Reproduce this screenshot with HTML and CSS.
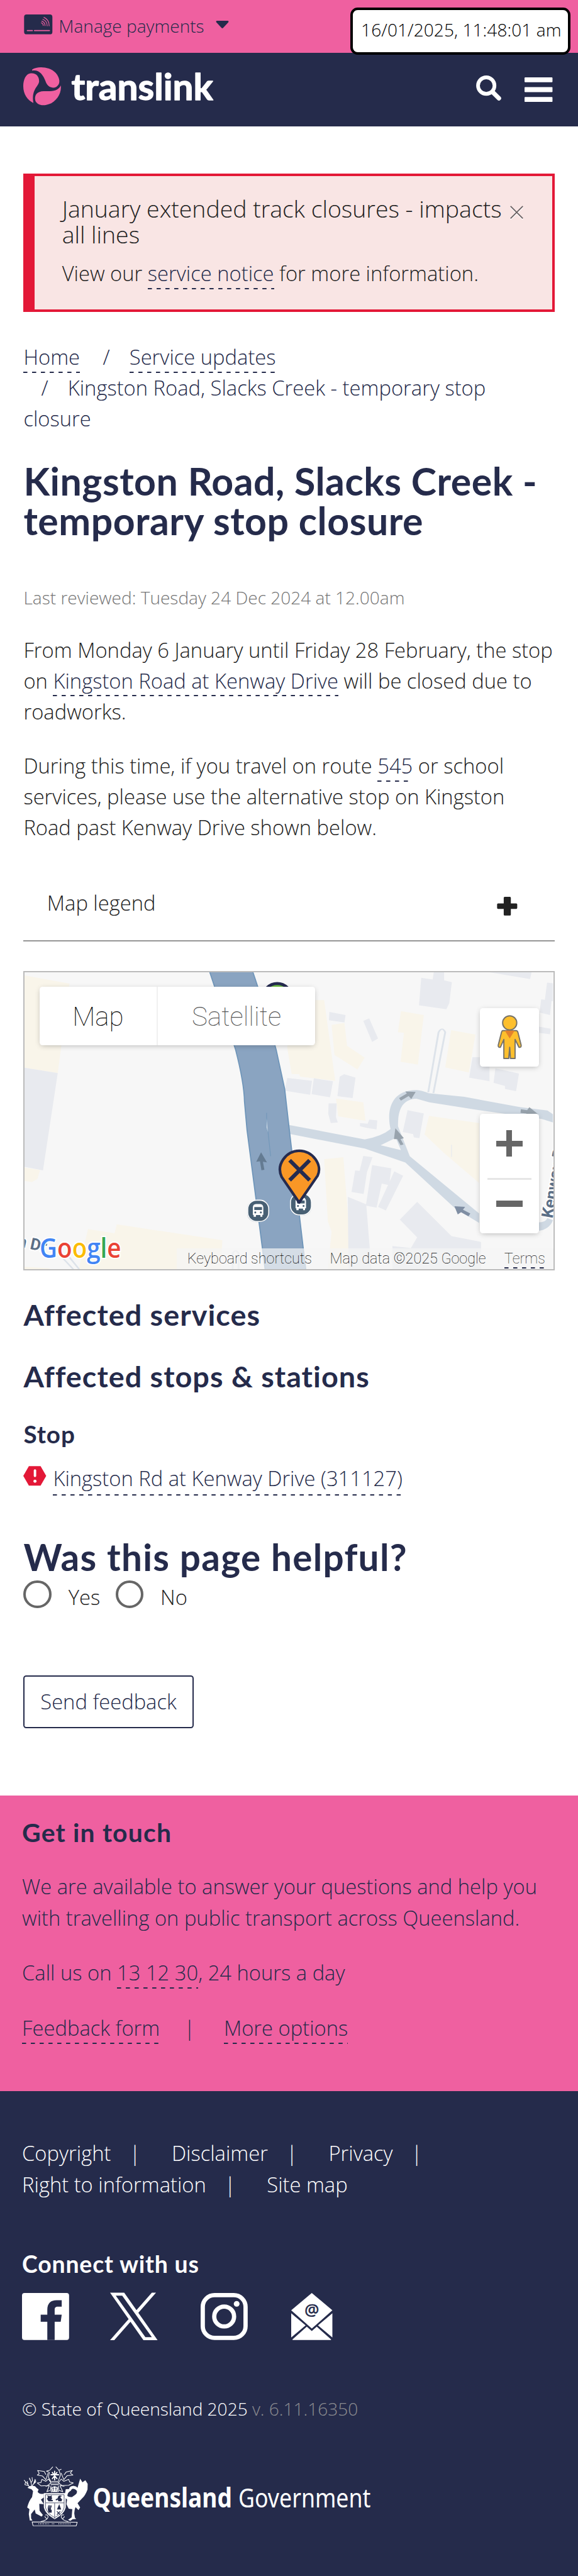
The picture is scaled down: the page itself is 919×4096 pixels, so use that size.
FILE: index.html
```
<!DOCTYPE html>
<html lang="en">
<head>
<meta charset="utf-8">
<title>Kingston Road, Slacks Creek - temporary stop closure | Translink</title>
<link rel="stylesheet" href="styles.css">
</head>
<body>
<div class="topbar">
  <svg class="card-icon" viewBox="58 27 176 123"><rect x="59" y="27" width="174" height="122" rx="15" fill="#252b4b"/><path d="M79 126H110M123 126H215" stroke="#ef60a0" stroke-width="7" stroke-linecap="round"/><path d="M165 78q12 5 12 17M168 68q20 7 20 28M174 57q27 10 27 40M181 45q33 14 32 52" fill="none" stroke="#ef60a0" stroke-width="4.5" stroke-linecap="round"/></svg>
  <span class="topbar-label">Manage payments</span>
  <svg class="caret" viewBox="0 0 17 10"><path d="M1.6 0H15.4Q17.4 .4 16.3 2L9.6 9.3Q8.5 10.3 7.4 9.3L.7 2Q-.4 .4 1.6 0Z" fill="#252b4b"/></svg>
  <div class="timestamp">16/01/2025, 11:48:01 am</div>
</div>
<header class="navbar">
  <svg class="brand" viewBox="54 350 1164 232"><g fill="#ef60a0"><path d="M108 364C140 342 215 345 252 384C282 418 282 455 256 470C226 484 200 465 190 435C176 395 150 362 108 370Z"/><path d="M92 388C128 380 151 402 151 435C149 470 102 482 116 568C80 550 54 515 54 465C54 425 70 393 92 388Z"/><path d="M284 461C288 500 270 545 225 570C180 590 142 585 128 555C120 520 138 497 180 496C220 497 267 500 284 461Z"/></g><text x="349" y="549" textLength="867" lengthAdjust="spacingAndGlyphs" class="brand-text">translink</text></svg>
  <svg class="search" viewBox="0 0 17 17" fill="none" stroke="#fff"><circle cx="6.9" cy="6.9" r="5.6" stroke-width="2.5"/><path d="M11.3 11.3L15.5 15.5" stroke-width="3" stroke-linecap="round"/></svg>
  <svg class="menu" viewBox="0 0 19 17" fill="#fff"><rect width="19" height="3.3" rx=".5"/><rect y="6.6" width="19" height="3.4" rx=".5"/><rect y="13.4" width="19" height="3.3" rx=".5"/></svg>
</header>
<main class="main">
  <section class="alert">
    <div class="alert-title">January extended track closures - impacts<br>all lines</div>
    <p class="alert-text">View our <a class="link">service notice</a> for more information.</p>
    <svg class="close" viewBox="0 0 27 29" fill="none"><path d="M1 3L26 28M26 3L1 28" stroke="#fff" stroke-width="2.6"/><path d="M1 1L26 26M26 1L1 26" stroke="#6b6264" stroke-width="2.4"/></svg>
  </section>
  <nav class="crumbs"><a class="link">Home</a> <span class="sep">/</span><a class="link">Service updates</a><br><span class="sep">/</span>Kingston Road, Slacks Creek - temporary stop<br>closure</nav>
  <h1 class="title">Kingston Road, Slacks Creek -<br>temporary stop closure</h1>
  <p class="reviewed">Last reviewed: Tuesday 24 Dec 2024 at 12.00am</p>
  <p class="copy">From Monday 6 January until Friday 28 February, the stop<br>on <a class="link">Kingston Road at Kenway Drive</a> will be closed due to<br>roadworks.</p>
  <p class="copy">During this time, if you travel on route <a class="link">545</a> or school<br>services, please use the alternative stop on Kingston<br>Road past Kenway Drive shown below.</p>
  <div class="legend"><span>Map legend</span><svg class="plus" viewBox="0 0 41 38"><path d="M2 13.5H13.5V2Q13.5 0 15.5 0H26Q28 0 28 2V13.5H39Q41 13.5 41 15.5V22.5Q41 24.5 39 24.5H28V36Q28 38 26 38H15.5Q13.5 38 13.5 36V24.5H2Q0 24.5 0 22.5V15.5Q0 13.5 2 13.5Z" fill="#222"/></svg></div>

  <div class="map">
    <svg class="map-canvas" viewBox="68 55 1432 1437" preserveAspectRatio="none">
      <rect x="68" y="55" width="1432" height="1437" fill="#f7f7f7"/>
      <g fill="#f9f5ea">
        <path d="M68 70L190 110L158 543L68 517ZM68 1000L110 1012L103 1055L88 1070L68 1065Z"/>
        <path d="M790 190H880L910 580L815 560L812 548L792 548L780 420ZM900 310L935 300L942 410L990 468L970 525L908 455Z"/>
        <path d="M1088 243L1150 262L1134 502L1087 488L1096 348L1080 345ZM1224 335L1290 356L1272 540L1208 515Z"/>
        <path d="M912 666L986 684L992 774L918 752ZM880 960L932 950L956 1492H890L900 1310L890 1260Z"/>
        <path d="M1164 750L1300 785V1075L1205 930L1152 840ZM240 1298L312 1318L318 1275L604 1352L600 1492H215ZM68 1480L136 1488V1492H68Z"/>
      </g>
      <g fill="#e8eaef">
        <path d="M68 517L158 543L118 1014L68 996ZM1143 82L1174 90L1177 55H1205V94L1226 103L1219 205L1211 234L1137 215ZM1328 55H1442L1438 88Z"/>
        <path d="M894 247L938 262L935 298L893 287ZM986 290L1002 278L1026 375L1010 392ZM1484 105L1500 108V195L1478 190ZM1468 186L1496 192L1492 262L1464 250ZM1462 318L1494 328L1492 355L1462 348Z"/>
        <path d="M780 566L847 580L842 648L773 628ZM852 568L904 582L896 660L846 645ZM922 560L934 548L965 565L957 664L916 655ZM892 690L914 690L912 755L917 782L898 785L891 740Z"/>
        <path d="M977 785L998 788L1002 768L1024 772L1022 815L996 808L977 800ZM1106 722L1150 738L1138 858L1123 854L1121 838L1093 828ZM1282 466H1328V582L1273 565ZM1344 520L1408 545L1400 630L1370 620V605L1339 590Z"/>
        <path d="M986 944L1011 950L996 1022L987 1128L954 1118L964 1014L976 1016ZM1010 988L1062 1004L1056 1085L1036 1078L1022 1194L993 1184ZM1070 1018L1094 1040L1047 1208L1026 1190Z"/>
        <path d="M944 1142L994 1178L1008 1492H946ZM1132 1166L1225 1332L1305 1360V1492H1065V1380L1115 1390L1132 1338L1085 1252Z"/>
      </g>
      <path d="M68 765L125 780M105 888L125 893M1225 890V948" stroke="#e8eaef" stroke-width="2"/>
      <path d="M1162 636L1190 345Q1200 315 1208 345L1176 640M170 1435L200 1492M190 1435L216 1492M632 1492V1415Q640 1390 648 1415V1492" fill="none" stroke="#dde3ea" stroke-width="5"/>
      <path fill="#cfd9e3" d="M780 792L990 864Q1035 850 1060 814C1050 740 1055 625 1130 625Q1145 626 1163 640L1260 658L1412 708L1485 724L1500 742V782L1470 765L1300 722L1165 684L1130 667C1085 670 1080 740 1080 800L1112 945L1300 1222V1268L1235 1198L1100 976L990 908L782 836ZM1033 892L1088 916L1074 856ZM1460 1266Q1480 1265 1485 1245L1500 1255Q1490 1300 1460 1307Z" fill-rule="evenodd"/>
      <path d="M570 55L640 430Q663 590 664 680L671 820L720 1492H830L787 840L773 620L750 430Q715 200 687 55Z" fill="#8aa4c1"/>
      <path d="M570 55L640 430Q663 590 664 680L671 820L720 1492M687 55Q715 200 750 430L773 620L787 840L830 1492" fill="none" stroke="#6e95b9" stroke-width="3"/>
      <path d="M724 735V810L728 830L735 945" fill="none" stroke="#7398ba" stroke-width="2"/><path d="M724 762L727 830L724 805Z" fill="#e9eef2"/>
      <g fill="#647b92"><path d="M709 926L725 975L714 972L718 1011L710 1013L706 970L696 972Z"/></g>
      <g fill="#98a3ad"><path d="M1073 810L1096 858L1087 862L1095 888L1087 892L1078 862L1069 862ZM1128 634L1100 632L1104 642L1083 664L1088 676L1109 654L1116 668ZM1413 718L1430 722L1436 708L1460 742L1426 748L1428 738L1412 735Z"/></g>
      <path d="M1233 1187L1262 1190L1256 1204L1276 1222L1271 1236L1251 1216L1242 1227Z" fill="#7f8ea3"/>
      <g transform="translate(638.4 855.4) scale(.4433 .792)">
        <g id="bus"><rect x="74" y="382" width="134" height="134" rx="54" fill="#5d7288" opacity=".35"/><rect x="78" y="382" width="128" height="130" rx="54" fill="#486074" stroke="#fff" stroke-width="6"/><path d="M109 425Q111 407 128 406H155Q170 407 173 425V472H167V483H155V473H128V483H114V472H109Z" fill="#fff"/><rect x="118" y="424" width="47" height="18" fill="#486074"/><circle cx="124" cy="457" r="6" fill="#486074"/><circle cx="158" cy="457" r="6" fill="#486074"/></g>
        <use href="#bus" x="261" y="-40"/>
        <path d="M392 396L285 240C250 165 310 82 393 80C476 82 536 165 505 232Z" fill="#f99726" stroke="#252b4f" stroke-width="16" stroke-linejoin="round"/>
        <path d="M334 138L456 260M456 138L334 260" stroke="#252b4f" stroke-width="24"/>
      </g>
      <g transform="scale(1.33 2.376)">
        <circle cx="566" cy="75" r="29" fill="#6fbe44" stroke="#252b4f" stroke-width="6"/>
        <text class="road-label" transform="translate(1127 525) rotate(-80)">Kenway Dr</text>
        <text class="road-label" transform="translate(35 581) rotate(12)">n Dr</text>
        <text class="google" x="82" y="605" textLength="166" lengthAdjust="spacingAndGlyphs"><tspan fill="#4285f4">G</tspan><tspan fill="#ea4335">o</tspan><tspan fill="#fbbc05">o</tspan><tspan fill="#4285f4">g</tspan><tspan fill="#34a853">l</tspan><tspan fill="#ea4335">e</tspan></text>
      </g>
    </svg>
    <div class="map-type"><span class="map-tab on">Map</span><span class="map-tab sat">Satellite</span></div>
    <div class="pegman"><svg viewBox="0 0 50 91"><g fill="#fdbf2d" stroke="#777369" stroke-width="2.5" stroke-linejoin="round"><path d="M11 32H38Q41 32 42 36L48.500 62Q49 67 44 66L36 50V89H26.500L25 66L23 89H13V50L6 66Q1 67 1.500 62L8 36Q9 32 11 32Z"/><circle cx="25" cy="16" r="14.500"/></g><path d="M15 32H35L25 48Z" fill="#e2812d"/></svg></div>
    <div class="zoom"><span class="zoom-in"></span><span class="zoom-line"></span><span class="zoom-out"></span></div>
    <div class="credits"><span class="keys">Keyboard shortcuts</span><span class="data">Map data ©2025 Google</span><span class="link terms">Terms</span></div>
  </div>

  <h2 class="heading">Affected services</h2>
  <h2 class="heading second">Affected stops &amp; stations</h2>
  <h3 class="subheading">Stop</h3>
  <div class="stop"><svg class="warn" viewBox="0 0 47 40"><path d="M11.500 0H35.500L47 20L35.500 40H11.500L0 20Z" fill="#e31837"/><path d="M24 9V20" stroke="#fff" stroke-width="5" stroke-linecap="round"/><circle cx="24" cy="31" r="3.200" fill="#fff"/></svg><a class="link">Kingston Rd at Kenway Drive (311127)</a></div>
  <h2 class="helpful">Was this page helpful?</h2>
  <div class="radios"><span class="radio"></span><span class="yes">Yes</span><span class="radio"></span><span class="no">No</span></div>
  <div class="button">Send feedback</div>
</main>
<section class="touch">
  <h2 class="touch-title">Get in touch</h2>
  <p>We are available to answer your questions and help you<br>with travelling on public transport across Queensland.</p>
  <p>Call us on <a class="link">13 12 30</a>, 24 hours a day</p>
  <p class="touch-links"><a class="link">Feedback form</a><span class="bar">|</span><a class="link">More options</a></p>
</section>
<footer class="footer">
  <div class="row"><span>Copyright</span><i>|</i><span>Disclaimer</span><i>|</i><span>Privacy</span><i>|</i></div>
  <div class="row"><span>Right to information</span><i>|</i><span>Site map</span></div>
  <h3 class="connect">Connect with us</h3>
  <div class="social">
    <svg class="fb" viewBox="0 0 32 32"><rect width="32" height="32" rx="1.700" fill="#fff"/><path d="M17.200 32V19.600H12.700V14.800H17.200V11.500C17.200 7 19.500 4.900 23.500 4.900H27V9.300H24.400C22.800 9.300 22.200 9.900 22.200 11.400V14.800H27L26.300 19.600H22.200V32Z" fill="#252b4b"/></svg>
    <svg class="x" viewBox="0 0 300 300.250"><path fill="#fff" d="M178.570 127.150 290.270 0h-26.460l-97.030 110.380L89.340 0H0l117.130 166.930L0 300.250h26.460l102.400-116.590 81.800 116.590h89.340M36.010 19.540H76.660l187.130 262.130h-40.660"/></svg>
    <svg class="ig" viewBox="0 0 32 32" fill="none" stroke="#fff"><rect x="1.450" y="1.450" width="29.100" height="29.100" rx="8" stroke-width="2.900"/><circle cx="16" cy="16" r="6.750" stroke-width="2.900"/><circle cx="24.500" cy="7.400" r="1.950" fill="#fff" stroke="none"/></svg>
    <svg class="mail" viewBox="0 0 28 32"><path d="M14 0L28 11.800L14 24.200L0 11.800ZM0 13.800L9.800 22L0 30.300ZM28 13.800L18.200 22L28 30.300ZM.8 31.600L10.600 22.900L14 25.900L17.400 22.900L27.200 31.600Q27 32 26.500 32H1.500Q1 32 .8 31.600Z" fill="#fff"/><text class="at" x="14" y="15.600" text-anchor="middle">@</text></svg>
  </div>
  <p class="copyright">© State of Queensland 2025 <span>v. 6.11.16350</span></p>
  <div class="gov">
    <svg class="crest" viewBox="56 60 393 364">
      <g fill="#fff">
        <path d="M78 190Q90 176 108 177L124 180Q130 188 146 200L140 214Q150 232 178 225V248L160 262L178 290L150 288L152 330L172 356L164 366L128 346L122 322L100 350V376L108 390H92L86 350L90 320L76 310Q86 270 106 246L112 210L102 198Q88 196 78 190Z"/>
        <path d="M312 198L346 196Q348 206 336 212Q322 222 322 240Q330 248 350 246Q392 222 378 206Q368 194 352 196L340 206Q330 204 334 190Q344 176 362 178Q378 180 384 190L400 134L414 156L432 144L446 166L445 200Q430 240 412 254L384 284L400 310L390 326L372 308Q366 320 364 346L368 372L376 380L354 382L340 392L326 386L348 370L352 320L330 318L316 290L320 262L308 250V220Z"/>
        <path d="M178 222H312V310Q304 350 244 382Q186 350 178 310Z"/>
      </g>
      <g fill="none" stroke="#fff" stroke-width="4" stroke-linejoin="round" stroke-linecap="round">
        <path d="M58 144L80 168L88 182M66 156L62 170L84 176M76 150L82 172M90 130L100 158L104 180M90 136L96 142M106 126L108 146L100 158M124 138L116 164L104 180M130 152L112 170M128 142L122 158"/>
        <path d="M252 62L270 82L284 76M270 82L280 110L266 150M232 62L214 82L194 88L212 96L206 124L220 150M140 84L150 102L138 112L170 118L190 140L204 100M140 84L180 90L190 108M352 84L340 100L356 112L320 116L300 140L284 100M352 84L314 94L302 110M138 160L160 158L166 138L190 150L206 136L222 160L200 176L160 178ZM358 160L336 154L330 138L300 150L284 136L266 160L290 176L330 174Z"/>
        <path d="M224 150H266M218 160H272M222 170H268M190 180L212 176L196 214L214 206M302 180L276 176L294 214L272 206M222 178Q216 200 224 216M266 178Q274 200 264 216M188 356Q202 352 204 368Q200 388 160 396M184 366L194 378M300 356Q284 352 284 368Q290 388 326 396M304 366L294 378"/>
        <path d="M244 88V142M222 110H268M230 96L258 134M258 96L230 134" stroke-width="7"/>
        <path d="M106 398L382 400L376 422L112 421Z"/>
        <path d="M146 410H208M228 410H246M268 410H344" stroke-width="7" stroke-dasharray="3 7" stroke-linecap="butt"/>
      </g>
      <path d="M222 190Q244 170 266 190L260 216H228Z" fill="#fff"/>
      <g fill="none" stroke="#252b4b" stroke-width="3"><path d="M190 282H302M244 284V378M188 232H302M188 232V310Q196 346 244 372Q296 344 302 310V232M235 184V210M229 194H241M252 184V210M246 194H258"/></g>
      <g fill="#252b4b"><path d="M200 234L206 240H220L226 234V246Q232 258 222 262L234 266L232 272H206L196 256L202 250ZM252 268L250 260L262 254L266 242Q276 232 290 242L280 244Q278 254 290 260L286 272H266L264 262ZM202 296L208 320L206 296H214V320L218 296L226 298L220 322L226 324V342H206L202 320ZM272 290L284 322H258Z"/><path d="M258 334L278 354M278 334L258 354" stroke="#252b4b" stroke-width="5"/></g>
    </svg>
    <svg class="gov-text" viewBox="0 0 566 60"><text class="q" x="-2" y="44" textLength="284" lengthAdjust="spacingAndGlyphs">Queensland</text><text class="g" x="295" y="44" textLength="270" lengthAdjust="spacingAndGlyphs">Government</text></svg>
  </div>
</footer>
</body>
</html>
```
FILE: styles.css
```
/* 1rem is ten layout units; the page is 393 units wide */
html { font-size: 23.385px; }
* { box-sizing: border-box; margin: 0; padding: 0; }
body { font: 300 1.4rem/2.1rem "Open Sans", sans-serif; color: #222; background: #fff; height: 4096px; overflow: hidden; white-space: nowrap; }
svg { display: block; flex: none; overflow: visible; }
h1, h2, h3 { font-family: Lato, sans-serif; font-weight: 700; color: #252b4b; }
.link { color: #252b4b; padding-bottom: .13rem; background: linear-gradient(90deg, #252b4b 50%, transparent 50%) 0 100% / .6rem .1rem repeat-x; }

.topbar { position: relative; height: 3.6rem; background: #ef60a0; color: #252b4b; display: flex; align-items: flex-start; padding: .84rem 0 0 1.64rem; font-size: 1.2rem; line-height: 1.8rem; }
.card-icon { width: 1.95rem; height: 1.36rem; margin-top: .13rem; }
.topbar-label { margin: 0 .78rem 0 .4rem; }
.caret { width: .9rem; height: .52rem; margin-top: .56rem; }
.timestamp { position: absolute; left: 23.83rem; top: .5rem; width: 14.97rem; height: 3.2rem; padding: .45rem 0 0 .55rem; background: #fff; border: .2rem solid #000; border-radius: .5rem; color: #000; letter-spacing: .003rem; }
.navbar { height: 5rem; background: #252b4b; display: flex; align-items: flex-start; padding: .97rem 1.73rem 0 1.6rem; }
.brand { width: 12.93rem; height: 2.58rem; }
.brand-text { font: 700 222px Lato, sans-serif; fill: #fff; stroke: #fff; stroke-width: 5; stroke-linejoin: round; }
.search { width: 1.7rem; height: 1.7rem; margin: .55rem 1.62rem 0 auto; }
.menu { width: 1.9rem; height: 1.7rem; margin-top: .7rem; }

.main { height: 113.5rem; padding: 3.2rem 1.6rem 0; }
.alert { position: relative; height: 9.4rem; background: #f9e5e4; border: .2rem solid #e31837; border-left-width: .8rem; padding: 1.36rem 0 0 1.85rem; }
.alert-title { font-size: 1.6rem; line-height: 1.75rem; margin-bottom: .7rem; }
.close { position: absolute; right: 1.95rem; top: 2.02rem; width: .9rem; height: .97rem; }
.crumbs { margin-top: 2.03rem; color: #252b4b; }
.sep { padding: 0 1.33rem 0 1.2rem; }
.title { margin-top: 1.82rem; font-size: 2.6rem; line-height: 2.7rem; letter-spacing: .022rem; }
.reviewed { margin-top: 2.98rem; font-size: 1.2rem; line-height: 1.8rem; color: #767676; }
.copy { margin-top: 1.6rem; }
.legend { margin-top: 1.38rem; height: 5.3rem; padding: 1.64rem 2.5rem 0 1.6rem; border-bottom: .1rem solid #959595; display: flex; justify-content: space-between; align-items: flex-start; }
.plus { width: 1.4rem; height: 1.27rem; margin-top: .65rem; }

.map { position: relative; margin-top: 2rem; height: 20.36rem; border: .1rem solid #bbb; overflow: hidden; font: 100 1.8rem/2.1rem Roboto, sans-serif; }
.map-canvas { width: 100%; height: 100%; overflow: hidden; }
.road-label { font: 700 33px Roboto, sans-serif; fill: #5b6f87; stroke: #fff; stroke-width: 5; paint-order: stroke; }
.google { font: 600 55px "Open Sans", sans-serif; stroke: #fff; stroke-width: 5; paint-order: stroke; }
.map-type { position: absolute; left: 1rem; top: 1rem; width: 18.75rem; height: 4rem; display: flex; align-items: center; background: #fff; border-radius: .2rem; box-shadow: 0 .1rem .4rem -.1rem rgba(0,0,0,.3); }
.map-tab { height: 100%; display: flex; align-items: center; justify-content: center; padding-top: .1rem; }
.on { width: 8.05rem; color: #000; border-right: .1rem solid #f0f0f0; }
.sat { flex: 1; color: #565656; }
.pegman { position: absolute; right: .98rem; top: 2.45rem; width: 4rem; height: 4rem; display: flex; align-items: center; justify-content: center; background: #fff; border-radius: .2rem; box-shadow: 0 .1rem .4rem -.1rem rgba(0,0,0,.3); }
.pegman svg { width: 1.66rem; height: 3.02rem; }
.zoom { position: absolute; right: .98rem; top: 9.66rem; width: 4rem; height: 8.1rem; display: flex; flex-direction: column; align-items: center; justify-content: space-between; padding: 1.1rem 0 1.8rem; background: #fff; border-radius: .2rem; box-shadow: 0 .1rem .4rem -.1rem rgba(0,0,0,.3); }
.zoom-in { width: 1.8rem; height: 1.8rem; background: linear-gradient(#666, #666) center / 100% .4rem no-repeat, linear-gradient(#666, #666) center / .4rem 100% no-repeat; }
.zoom-line { width: 3rem; height: .1rem; background: #e6e6e6; }
.zoom-out { width: 1.8rem; height: .4rem; background: #666; }
.credits { position: absolute; right: 0; bottom: 0; width: 25.6rem; height: 1.4rem; padding-left: .72rem; display: flex; align-items: flex-start; background: rgba(245,245,245,.7); font: 100 1rem/1.4rem Roboto, sans-serif; color: #000; }
.data { margin-left: 1.22rem; }
.terms { margin-left: 1.25rem; height: 1.4rem; padding: 0; color: #222; }

.heading { margin-top: 1.8rem; font-size: 2rem; line-height: 2.4rem; letter-spacing: .044rem; }
.second { margin-top: 1.82rem; }
.subheading { margin-top: 1.74rem; font-size: 1.65rem; line-height: 2rem; letter-spacing: .04rem; }
.stop { margin-top: .96rem; display: flex; align-items: flex-start; }
.warn { width: 1.56rem; height: 1.34rem; margin: .2rem .45rem 0 0; }
.helpful { margin-top: 2.82rem; font-size: 2.5rem; line-height: 2.6rem; letter-spacing: .055rem; }
.radios { margin-top: .31rem; display: flex; align-items: flex-start; }
.radio { width: 1.9rem; height: 1.9rem; border: .2rem solid #666; border-radius: 50%; }
.yes { margin: .12rem 1.05rem 0 1.15rem; }
.no { margin: .12rem 0 0 1.15rem; }
.button { margin-top: 4.26rem; width: 11.56rem; height: 3.58rem; border: .1rem solid #252b4b; border-radius: .2rem; color: #252b4b; line-height: 3.38rem; text-align: center; }

.touch { height: 20.1rem; background: #ef60a0; color: #252b4b; padding: 1.54rem 1.5rem 0; }
.touch-title { font-size: 1.75rem; line-height: 2rem; margin-bottom: 1.6rem; letter-spacing: .05rem; }
.touch p { margin-bottom: 1.65rem; }
.bar { margin: 0 1.96rem 0 1.63rem; }
.footer { height: 33rem; background: #252b4b; color: #fff; padding: 3.17rem 1.5rem 0; }
.row { display: flex; }
.row i { font-style: normal; margin: 0 2.12rem 0 1.25rem; }
.connect { margin-top: 3.4rem; font-size: 1.6rem; line-height: 2rem; letter-spacing: .035rem; color: #fff; }
.social { margin-top: .96rem; display: flex; }
.fb, .ig { width: 3.2rem; height: 3.2rem; }
.x { width: 3.23rem; height: 3.27rem; margin: -.04rem 2.93rem 0 2.78rem; }
.mail { width: 2.8rem; height: 3.2rem; margin-left: 2.97rem; }
.at { font: 400 11px "Open Sans", sans-serif; fill: #252b4b; stroke: #252b4b; stroke-width: .3; }
.copyright { margin-top: 3.72rem; font-size: 1.2rem; line-height: 1.8rem; }
.copyright span { color: #8b8b90; }
.gov { margin-top: 3.02rem; display: flex; align-items: flex-start; padding-left: .12rem; }
.crest { width: 4.37rem; height: 4.05rem; }
.gov-text { width: 18.87rem; height: 2rem; margin: 1.33rem 0 0 .37rem; }
.q, .g { font: 700 54px "Noto Sans", sans-serif; fill: #fff; }
.g { font-weight: 400; }
```
